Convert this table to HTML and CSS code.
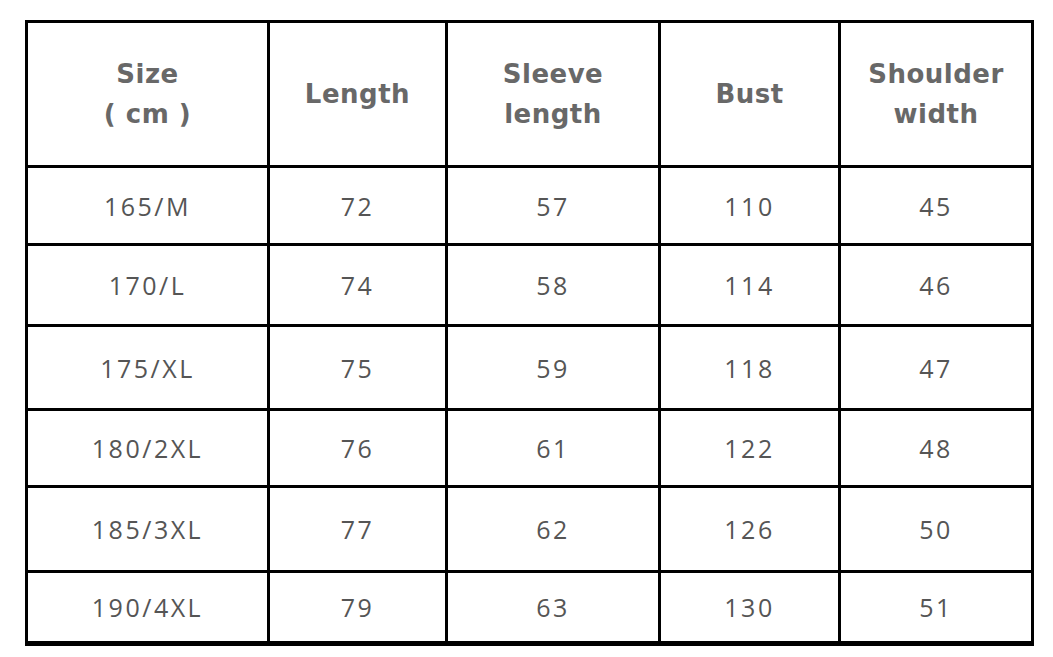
FILE: index.html
```html
<!DOCTYPE html>
<html>
<head>
<meta charset="utf-8">
<link rel="stylesheet" href="styles.css">
</head>
<body>
<div class="page">
  <div class="chart">
    <div class="cell head"><span>Size</span><span>( cm )</span></div>
    <div class="cell head"><span>Length</span></div>
    <div class="cell head"><span>Sleeve</span><span>length</span></div>
    <div class="cell head"><span>Bust</span></div>
    <div class="cell head"><span>Shoulder</span><span>width</span></div>

    <div class="cell">165/M</div><div class="cell">72</div><div class="cell">57</div><div class="cell">110</div><div class="cell">45</div>
    <div class="cell">170/L</div><div class="cell">74</div><div class="cell">58</div><div class="cell">114</div><div class="cell">46</div>
    <div class="cell">175/XL</div><div class="cell">75</div><div class="cell">59</div><div class="cell">118</div><div class="cell">47</div>
    <div class="cell">180/2XL</div><div class="cell">76</div><div class="cell">61</div><div class="cell">122</div><div class="cell">48</div>
    <div class="cell">185/3XL</div><div class="cell">77</div><div class="cell">62</div><div class="cell">126</div><div class="cell">50</div>
    <div class="cell">190/4XL</div><div class="cell">79</div><div class="cell">63</div><div class="cell">130</div><div class="cell">51</div>
  </div>
</div>
</body>
</html>
```

FILE: styles.css
```css
html, body {
  margin: 0;
  padding: 0;
  background: #ffffff;
}
.page {
  padding: 20px 0 0 25px;
}
.chart {
  display: grid;
  width: max-content;
  grid-template-columns: 239px 175px 210px 177px 190px;
  grid-template-rows: 142px 75px 78px 81px 74px 82px 68px;
  gap: 3px;
  padding: 3px 3px 5px 3px;
  background: #000000;
}
.cell {
  background: #ffffff;
  display: flex;
  flex-direction: column;
  align-items: center;
  justify-content: center;
  font-family: "Open Sans", "DejaVu Sans", sans-serif;
  font-size: 25px;
  letter-spacing: 2.5px;
  color: #555555;
}
.head {
  font-family: "DejaVu Sans", sans-serif;
  font-weight: bold;
  font-size: 26px;
  letter-spacing: 0.5px;
  line-height: 40px;
  color: #686868;
}
```
